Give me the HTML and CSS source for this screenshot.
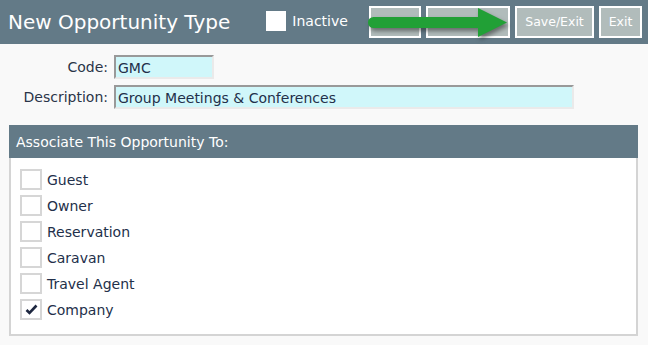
FILE: index.html
```html
<!DOCTYPE html>
<html lang="en">
<head>
    <meta charset="UTF-8">
    <title>New Opportunity Type</title>
    <link rel="stylesheet" href="styles.css">
</head>
<body>
    <div class="topbar">
        <div class="title">New Opportunity Type</div>
        <label class="inactive"><span class="white-box"></span>Inactive</label>
        <div class="actions">
            <button class="btn btn-save">Save</button>
            <button class="btn btn-edit">Save/Edit</button>
            <button class="btn btn-exit-save">Save/Exit</button>
            <button class="btn btn-exit">Exit</button>
        </div>
        <svg class="arrow" width="146" height="40" viewBox="0 0 146 40">
            <rect x="2" y="15" width="116" height="11" rx="5.5" fill="#21a036"/>
            <polygon points="112,6 141,20.5 112,35" fill="#21a036"/>
        </svg>
    </div>

    <div class="form">
        <label class="form-label">Code:</label>
        <input class="field field-code" type="text" value="GMC">
        <label class="form-label">Description:</label>
        <input class="field field-desc" type="text" value="Group Meetings &amp; Conferences">
    </div>

    <div class="panel">
        <div class="panel-header">Associate This Opportunity To:</div>
        <div class="panel-body">
            <div class="check-row"><span class="check-box"></span>Guest</div>
            <div class="check-row"><span class="check-box"></span>Owner</div>
            <div class="check-row"><span class="check-box"></span>Reservation</div>
            <div class="check-row"><span class="check-box"></span>Caravan</div>
            <div class="check-row"><span class="check-box"></span>Travel Agent</div>
            <div class="check-row">
                <span class="check-box">
                    <svg width="13" height="11" viewBox="0 0 13 11">
                        <path d="M1.5 6 L4.5 9 L11.5 1.5" fill="none" stroke="#1d2740" stroke-width="2.6"/>
                    </svg>
                </span>Company
            </div>
        </div>
    </div>
</body>
</html>
```

FILE: styles.css
```css
body {
    margin: 0;
    background: #f9f9f9;
    font-family: 'DejaVu Sans', Verdana, sans-serif;
    color: #23304a;
}

.topbar {
    position: relative;
    height: 44px;
    background: #637a87;
    display: flex;
    align-items: center;
    padding: 0 6px 0 8px;
}

.title {
    color: #fff;
    font-size: 20px;
    margin-top: -1px;
}

.inactive {
    display: flex;
    align-items: center;
    color: #fff;
    font-size: 14px;
    margin-left: 36px;
    margin-top: -2px;
}

.white-box {
    width: 20px;
    height: 20px;
    background: #fff;
    margin-right: 6px;
}

.actions {
    display: flex;
    gap: 5px;
    margin-left: auto;
    margin-top: -1px;
}

.btn {
    height: 32px;
    padding: 0;
    background: #b1bcbb;
    border: 2px solid #fff;
    color: #fff;
    font-family: 'DejaVu Sans', Verdana, sans-serif;
    font-size: 12.5px;
}

.btn-save { width: 52px; }
.btn-edit { width: 84px; }
.btn-exit-save { width: 79px; }
.btn-exit { width: 43px; }

.arrow {
    position: absolute;
    left: 366px;
    top: 2px;
    filter: drop-shadow(2px 3px 2px rgba(40, 40, 40, 0.55));
}

.form {
    display: grid;
    grid-template-columns: 108px auto;
    column-gap: 6px;
    row-gap: 6px;
    padding-top: 11px;
    align-items: center;
    justify-items: start;
}

.form-label {
    justify-self: end;
    font-size: 14px;
    color: #2a3448;
}

.field {
    box-sizing: border-box;
    height: 24px;
    background: #d0f7fa;
    border: 2px solid;
    border-color: #999 #eaeaea #eaeaea #999;
    padding: 1px 2px 0;
    font-family: 'DejaVu Sans', Verdana, sans-serif;
    font-size: 14px;
    color: #23304a;
}

.field-code { width: 100px; }
.field-desc { width: 460px; }

.panel {
    margin: 16px 10px 0 9px;
}

.panel-header {
    height: 33px;
    background: #637a87;
    color: #fff;
    font-size: 14px;
    display: flex;
    align-items: center;
    padding-left: 7px;
}

.panel-body {
    background: #fff;
    border: 2px solid #d4d4d4;
    border-top: none;
    padding: 11px 0 14px 9px;
    display: flex;
    flex-direction: column;
    gap: 5px;
}

.check-row {
    display: flex;
    align-items: center;
    font-size: 14px;
    color: #23304a;
}

.check-box {
    box-sizing: border-box;
    width: 22px;
    height: 21px;
    border: 2px solid #d6d6d6;
    background: #fff;
    margin-right: 5px;
    display: flex;
    align-items: center;
    justify-content: center;
}
```
